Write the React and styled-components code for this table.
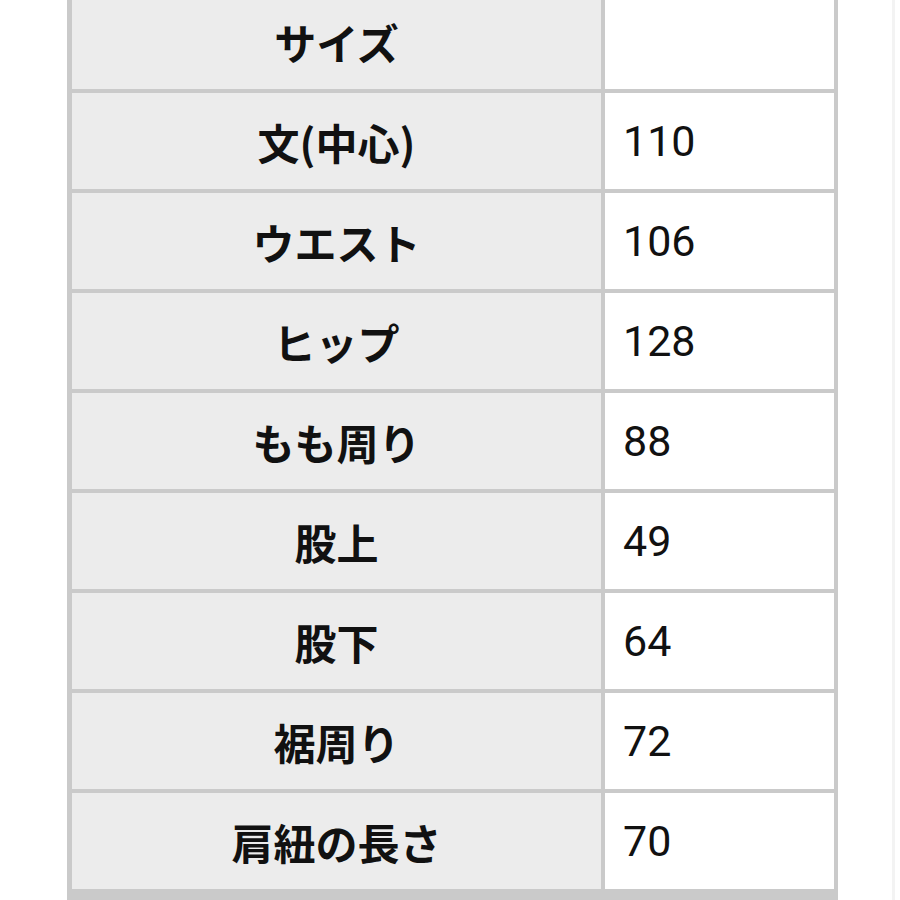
import React from 'react';
import styled, { createGlobalStyle } from 'styled-components';

const GlobalStyle = createGlobalStyle`
  html, body {
    margin: 0;
    padding: 0;
    background: #ffffff;
  }
  body {
    font-family: Roboto, "Noto Sans CJK JP", sans-serif;
    color: #111111;
    overflow: hidden;
  }
`;

const Page = styled.div`
  width: 825px;
  height: 900px;
  padding-left: 67px;
  border-right: 3px solid #f3f3f3;
  overflow: hidden;
`;

const Table = styled.div`
  display: grid;
  grid-template-columns: 529px 229px;
  grid-auto-rows: 96px;
  gap: 4px;
  width: max-content;
  margin-top: -11px;
  padding: 4px 4px 16px 5px;
  background: #cacaca;
`;

const Label = styled.div`
  display: flex;
  align-items: center;
  justify-content: center;
  background: #ececec;
  font-family: "Noto Sans CJK JP", sans-serif;
  font-weight: 700;
  font-size: 42px;
  letter-spacing: 0;
`;

const Value = styled.div`
  display: flex;
  align-items: center;
  padding-left: 18px;
  background: #ffffff;
  font-family: Roboto, "Noto Sans CJK JP", sans-serif;
  font-weight: 400;
  font-size: 43px;
`;

const rows = [
  ['サイズ', ''],
  ['文(中心)', '110'],
  ['ウエスト', '106'],
  ['ヒップ', '128'],
  ['もも周り', '88'],
  ['股上', '49'],
  ['股下', '64'],
  ['裾周り', '72'],
  ['肩紐の長さ', '70'],
];

export default function App() {
  return (
    <>
      <GlobalStyle />
      <Page>
        <Table>
          {rows.map(([label, value]) => (
            <React.Fragment key={label}>
              <Label>{label}</Label>
              <Value>{value}</Value>
            </React.Fragment>
          ))}
        </Table>
      </Page>
    </>
  );
}
